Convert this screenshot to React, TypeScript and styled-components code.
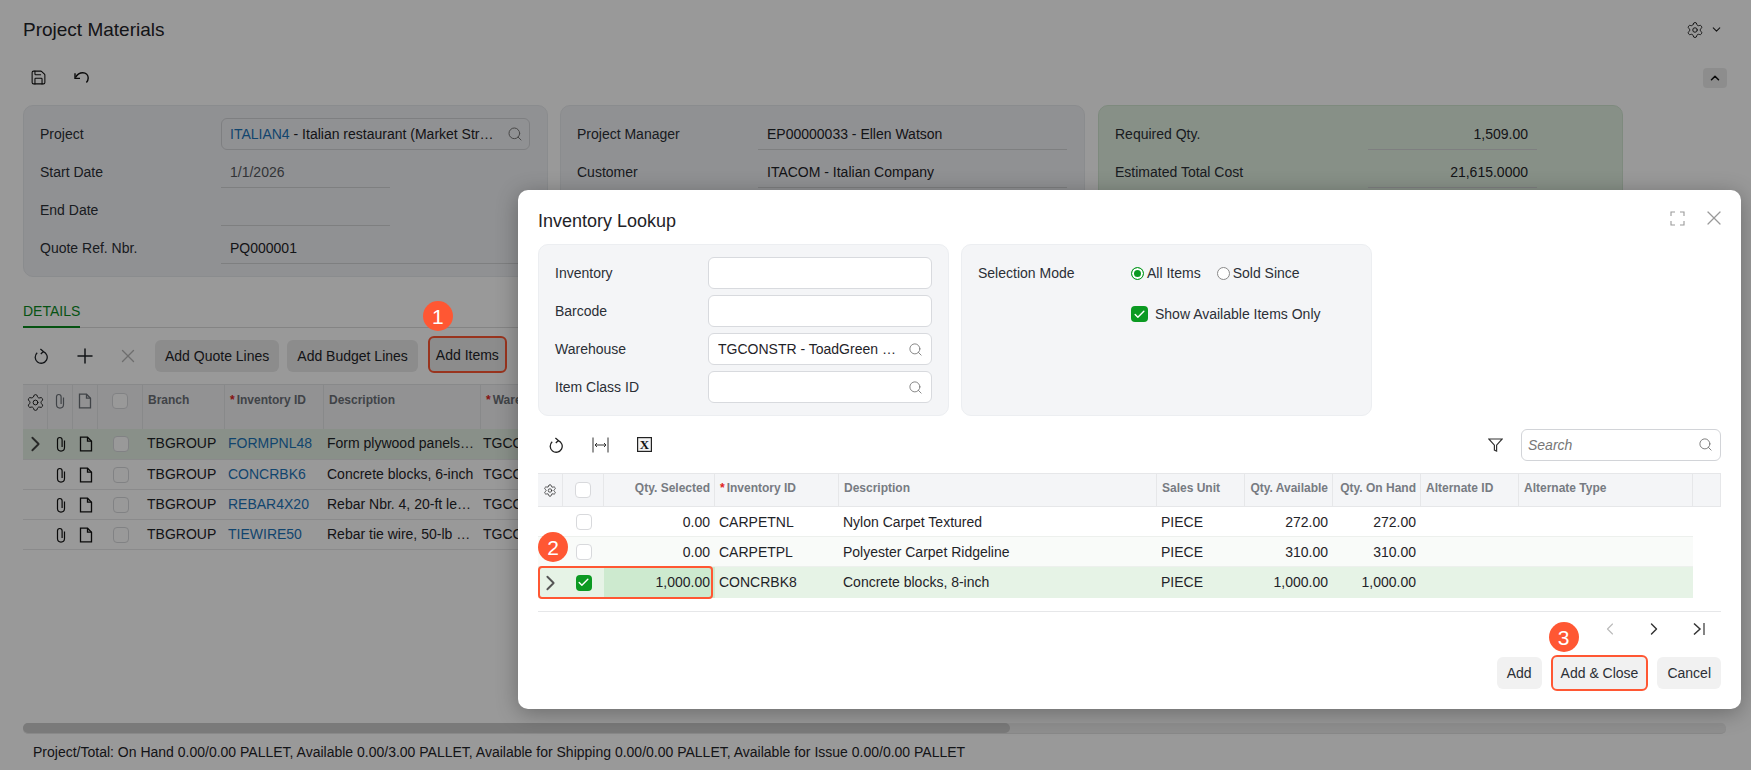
import React from 'react';
import styled, { createGlobalStyle } from 'styled-components';
import { Check, ChevronDown, ChevronLeft, ChevronRight, ChevronUp, Plus, Save, Search, Settings, X } from 'lucide-react';

const pageRows = [
  { id: 'FORMPNL48', desc: 'Form plywood panels, 4x8 ft', active: true },
  { id: 'CONCRBK6', desc: 'Concrete blocks, 6-inch', active: false },
  { id: 'REBAR4X20', desc: 'Rebar Nbr. 4, 20-ft length', active: false },
  { id: 'TIEWIRE50', desc: 'Rebar tie wire, 50-lb spool, annealed', active: false },
];

const lookupRows = [
  { qty: '0.00', id: 'CARPETNL', desc: 'Nylon Carpet Textured', avail: '272.00', hand: '272.00' },
  { qty: '0.00', id: 'CARPETPL', desc: 'Polyester Carpet Ridgeline', avail: '310.00', hand: '310.00' },
  { qty: '1,000.00', id: 'CONCRBK8', desc: 'Concrete blocks, 8-inch', avail: '1,000.00', hand: '1,000.00' },
];

function RefreshIcon() {
  return (
    <svg width="15" height="16" viewBox="0 0 15 16" fill="none" stroke="currentColor" strokeWidth="1.3">
      <path d="M3.2 4.8A6 6 0 1 0 9.2 3.6" />
      <path d="M6.4 1L9.4 3.6L6.8 6" />
    </svg>
  );
}

function UndoIcon() {
  return (
    <svg width="17" height="13" viewBox="0 0 17 13" fill="none" stroke="currentColor" strokeWidth="1.4">
      <path d="M2.5 6.5C4.5 3 7 1.8 9.8 1.8C13 1.8 15.2 4.2 15.2 7C15.2 9 14.4 10.4 13.4 11.4" />
      <path d="M2 2.2V7.4H7" />
    </svg>
  );
}

function ClipIcon() {
  return (
    <svg width="10" height="16" viewBox="0 0 10 16" fill="none" stroke="currentColor" strokeWidth="1.2">
      <path d="M8.5 4.5V11.6a3.5 3.5 0 0 1 -7 0V3.8a2.3 2.3 0 0 1 4.6 0V11" />
    </svg>
  );
}

function FileIcon() {
  return (
    <svg width="14" height="16" viewBox="0 0 14 16" fill="none" stroke="currentColor" strokeWidth="1.3">
      <path d="M1.5 1.2H8.5L12.5 5.2V14.8H1.5Z" />
      <path d="M8.5 1.2V5.2H12.5" />
    </svg>
  );
}

function FitIcon() {
  return (
    <svg width="17" height="16" viewBox="0 0 17 16" fill="none" stroke="#333" strokeWidth="1">
      <path d="M1 0.5V15.5M16 0.5V15.5M3 8H14" />
      <path d="M5 6L3 8L5 10M12 6L14 8L12 10" />
    </svg>
  );
}

function ExcelIcon() {
  return (
    <svg width="15" height="15" viewBox="0 0 15 15">
      <rect x="0.6" y="0.6" width="13.8" height="13.8" fill="#f4f4f4" stroke="#222" strokeWidth="1.2" />
      <text x="7.5" y="12" textAnchor="middle" fontFamily="'Liberation Serif', serif" fontWeight="700" fontSize="13" fill="#111">
        X
      </text>
    </svg>
  );
}

function FilterIcon() {
  return (
    <svg width="15" height="14" viewBox="0 0 15 14" fill="none" stroke="#333" strokeWidth="1.2">
      <path d="M0.8 1H14.2L8.6 7.2V13L6.4 12V7.2Z" />
    </svg>
  );
}

function ExpandIcon() {
  return (
    <svg width="15" height="15" viewBox="0 0 15 15" fill="none" stroke="#9a9a9a" strokeWidth="1.1">
      <path d="M5 1H1V5M10 1H14V5M5 14H1V10M10 14H14V10" />
    </svg>
  );
}

function LastPageIcon() {
  return (
    <svg width="14" height="14" viewBox="0 0 14 14" fill="none" stroke="#333" strokeWidth="1.5">
      <path d="M2 1.5L8 7L2 12.5" />
      <path d="M12 1V13" strokeWidth="1.2" />
    </svg>
  );
}

function App() {
  return (
    <>
      <GlobalStyle />
      <Page>
        <TitleBar>
          <PageTitle>Project Materials</PageTitle>
          <TitleTools>
            <Settings size={18} strokeWidth={1.3} />
            <ChevronDown size={13} strokeWidth={2} />
          </TitleTools>
        </TitleBar>
        <MainToolbar>
          <Save size={17} strokeWidth={1.5} />
          <UndoIcon />
          <CollapseButton>
            <ChevronUp size={14} strokeWidth={2.6} />
          </CollapseButton>
        </MainToolbar>

        <PanelRow>
          <Panel>
            <PanelLine $labelWidth={181}>
              <Label>Project</Label>
              <SearchField $width={309}>
                <FieldText>
                  <Link>ITALIAN4</Link> - Italian restaurant (Market Street Location)
                </FieldText>
                <Search size={16} strokeWidth={1.5} color="#777" />
              </SearchField>
            </PanelLine>
            <PanelLine $labelWidth={181}>
              <Label>Start Date</Label>
              <ReadField $width={169} $muted>1/1/2026</ReadField>
            </PanelLine>
            <PanelLine $labelWidth={181}>
              <Label>End Date</Label>
              <ReadField $width={169} />
            </PanelLine>
            <PanelLine $labelWidth={181}>
              <Label>Quote Ref. Nbr.</Label>
              <ReadField $width={309}>PQ000001</ReadField>
            </PanelLine>
          </Panel>
          <Panel>
            <PanelLine $labelWidth={181}>
              <Label>Project Manager</Label>
              <ReadField $width={309}>EP00000033 - Ellen Watson</ReadField>
            </PanelLine>
            <PanelLine $labelWidth={181}>
              <Label>Customer</Label>
              <ReadField $width={309}>ITACOM - Italian Company</ReadField>
            </PanelLine>
          </Panel>
          <Panel $green>
            <PanelLine $labelWidth={253}>
              <Label>Required Qty.</Label>
              <ReadField $width={169} $right>1,509.00</ReadField>
            </PanelLine>
            <PanelLine $labelWidth={253}>
              <Label>Estimated Total Cost</Label>
              <ReadField $width={169} $right>21,615.0000</ReadField>
            </PanelLine>
          </Panel>
        </PanelRow>

        <TabStrip>
          <Tab>DETAILS</Tab>
        </TabStrip>

        <DetailToolbar>
          <RefreshSlot>
            <RefreshIcon />
          </RefreshSlot>
          <PlusSlot>
            <Plus size={24} strokeWidth={1.5} />
          </PlusSlot>
          <DeleteSlot>
            <X size={22} strokeWidth={1.5} />
          </DeleteSlot>
          <PageButton>Add Quote Lines</PageButton>
          <PageButton>Add Budget Lines</PageButton>
          <BadgeAnchor>
            <PageButton $marked>Add Items</PageButton>
            <Badge $left={-5} $top={-35}>1</Badge>
          </BadgeAnchor>
        </DetailToolbar>

        <DetailGrid>
          <DetailHead>
            <HeadCell $center>
              <Settings size={19} strokeWidth={1.25} color="#222" />
            </HeadCell>
            <HeadCell $center>
              <ClipIcon />
            </HeadCell>
            <HeadCell $center>
              <FileIcon />
            </HeadCell>
            <HeadCell $center>
              <Box />
            </HeadCell>
            <HeadCell>Branch</HeadCell>
            <HeadCell>
              <Star>*</Star>Inventory ID
            </HeadCell>
            <HeadCell>Description</HeadCell>
            <HeadCell>
              <Star>*</Star>Warehouse
            </HeadCell>
          </DetailHead>
          {pageRows.map((row) => (
            <DetailRow key={row.id} $active={row.active}>
              <IconCell>{row.active && <ChevronRight size={26} strokeWidth={1.8} color="#444" />}</IconCell>
              <IconCell>
                <ClipIcon />
              </IconCell>
              <IconCell>
                <FileIcon />
              </IconCell>
              <IconCell>
                <Box />
              </IconCell>
              <TextCell>TBGROUP</TextCell>
              <TextCell>
                <Link>{row.id}</Link>
              </TextCell>
              <TextCell>{row.desc}</TextCell>
              <TextCell>TGCONSTR</TextCell>
            </DetailRow>
          ))}
        </DetailGrid>

        <Spacer />
        <ScrollTrack>
          <ScrollThumb />
        </ScrollTrack>
        <StatusBar>
          Project/Total: On Hand 0.00/0.00 PALLET, Available 0.00/3.00 PALLET, Available for Shipping 0.00/0.00 PALLET, Available for Issue 0.00/0.00 PALLET
        </StatusBar>

        <Overlay />

        <Dialog>
          <DialogHeader>
            <DialogTitle>Inventory Lookup</DialogTitle>
            <DialogTools>
              <ExpandIcon />
              <X size={24} strokeWidth={1.2} color="#999" />
            </DialogTools>
          </DialogHeader>

          <FilterRow>
            <FilterPanel>
              <FilterLine>
                <Label>Inventory</Label>
                <InputBox />
              </FilterLine>
              <FilterLine>
                <Label>Barcode</Label>
                <InputBox />
              </FilterLine>
              <FilterLine>
                <Label>Warehouse</Label>
                <InputBox>
                  <FieldText>TGCONSTR - ToadGreen Construction</FieldText>
                  <Search size={15} strokeWidth={1.4} color="#777" />
                </InputBox>
              </FilterLine>
              <FilterLine>
                <Label>Item Class ID</Label>
                <InputBox>
                  <FieldText />
                  <Search size={15} strokeWidth={1.4} color="#777" />
                </InputBox>
              </FilterLine>
            </FilterPanel>
            <FilterPanel>
              <ModeLine>
                <ModeLabel>Selection Mode</ModeLabel>
                <Choice>
                  <Radio $on />
                  All Items
                </Choice>
                <Choice>
                  <Radio />
                  Sold Since
                </Choice>
              </ModeLine>
              <AvailableLine>
                <Box $on $big>
                  <Check size={13} strokeWidth={2.6} color="#fff" />
                </Box>
                Show Available Items Only
              </AvailableLine>
            </FilterPanel>
          </FilterRow>

          <LookupToolbar>
            <LookupIcons>
              <RefreshIcon />
              <FitIcon />
              <ExcelIcon />
            </LookupIcons>
            <FilterIcon />
            <SearchBox>
              <SearchHint>Search</SearchHint>
              <Search size={15} strokeWidth={1.5} color="#777" />
            </SearchBox>
          </LookupToolbar>

          <LookupGrid>
            <LookupHead>
              <LookupHeadCell $center>
                <Settings size={19} strokeWidth={1.25} color="#222" />
              </LookupHeadCell>
              <LookupHeadCell $center>
                <Box />
              </LookupHeadCell>
              <LookupHeadCell $right>Qty. Selected</LookupHeadCell>
              <LookupHeadCell>
                <Star>*</Star>Inventory ID
              </LookupHeadCell>
              <LookupHeadCell>Description</LookupHeadCell>
              <LookupHeadCell>Sales Unit</LookupHeadCell>
              <LookupHeadCell $right>Qty. Available</LookupHeadCell>
              <LookupHeadCell $right>Qty. On Hand</LookupHeadCell>
              <LookupHeadCell>Alternate ID</LookupHeadCell>
              <LookupHeadCell>Alternate Type</LookupHeadCell>
              <LookupHeadCell />
            </LookupHead>
            {lookupRows.map((row, index) => {
              const selected = index === 2;
              return (
                <LookupRow key={row.id} $selected={selected} $odd={index === 1}>
                  {index === 1 && <Badge $left={0} $top={-5}>2</Badge>}
                  {selected && <RowMark />}
                  <IconCell>{selected && <ChevronRight size={26} strokeWidth={1.8} color="#555" />}</IconCell>
                  <IconCell>
                    {selected ? (
                      <Box $on>
                        <Check size={13} strokeWidth={2.6} color="#fff" />
                      </Box>
                    ) : (
                      <Box />
                    )}
                  </IconCell>
                  <TextCell $right $tint={selected}>{row.qty}</TextCell>
                  <TextCell>{row.id}</TextCell>
                  <TextCell>{row.desc}</TextCell>
                  <TextCell>PIECE</TextCell>
                  <TextCell $right>{row.avail}</TextCell>
                  <TextCell $right>{row.hand}</TextCell>
                  <TextCell />
                  <TextCell />
                </LookupRow>
              );
            })}
          </LookupGrid>

          <Pager>
            <ChevronLeft size={20} strokeWidth={1.4} color="#bbb" />
            <ChevronRight size={20} strokeWidth={1.7} color="#333" />
            <LastPageSlot>
              <LastPageIcon />
            </LastPageSlot>
          </Pager>

          <DialogFooter>
            <DialogButton>Add</DialogButton>
            <BadgeAnchor>
              <DialogButton $marked>Add &amp; Close</DialogButton>
              <Badge $left={-2} $top={-33}>3</Badge>
            </BadgeAnchor>
            <DialogButton>Cancel</DialogButton>
          </DialogFooter>
        </Dialog>
      </Page>
    </>
  );
}

export default App;

const GlobalStyle = createGlobalStyle`
  html, body {
    margin: 0;
    padding: 0;
    height: 100%;
    overflow: hidden;
    background: #fff;
  }
  #root {
    height: 100%;
  }
  * {
    box-sizing: border-box;
  }
`;

const Page = styled.div`
  position: relative;
  width: 1751px;
  height: 770px;
  display: flex;
  flex-direction: column;
  overflow: hidden;
  background: #fff;
  color: #1f2328;
  font-family: 'Liberation Sans', Arial, sans-serif;
  font-size: 14px;
`;

const TitleBar = styled.div`
  height: 59px;
  padding: 0 28px 0 23px;
  display: flex;
  align-items: center;
  justify-content: space-between;
  flex-shrink: 0;
`;

const PageTitle = styled.div`
  font-size: 19px;
  color: #1f2328;
`;

const TitleTools = styled.div`
  display: flex;
  align-items: center;
  gap: 6px;
  color: #222;
`;

const MainToolbar = styled.div`
  height: 37px;
  padding: 0 24px 0 30px;
  display: flex;
  align-items: center;
  gap: 26px;
  flex-shrink: 0;
  color: #111;
  margin-bottom: 9px;
`;

const CollapseButton = styled.div`
  width: 24px;
  height: 20px;
  margin-left: auto;
  display: flex;
  align-items: center;
  justify-content: center;
  border-radius: 4px;
  background: #ececec;
  color: #111;
`;

const PanelRow = styled.div`
  padding-left: 23px;
  display: flex;
  gap: 12px;
  flex-shrink: 0;
`;

const Panel = styled.div<{ $green?: boolean }>`
  width: 525px;
  height: 172px;
  margin-left: ${(p) => (p.$green ? 1 : 0)}px;
  padding: 12px 16px;
  display: flex;
  flex-direction: column;
  gap: 6px;
  border-radius: 10px;
  border: 1px solid ${(p) => (p.$green ? '#d3e7d3' : '#e7e9ed')};
  background: ${(p) => (p.$green ? '#e2f1e2' : '#f1f2f5')};
`;

const PanelLine = styled.div<{ $labelWidth: number }>`
  height: 32px;
  display: grid;
  grid-template-columns: ${(p) => p.$labelWidth}px 1fr;
  align-items: center;
`;

const Label = styled.div`
  color: #2b2f36;
  white-space: nowrap;
`;

const SearchField = styled.div<{ $width: number }>`
  width: ${(p) => p.$width}px;
  height: 32px;
  padding: 0 6px 0 8px;
  display: flex;
  align-items: center;
  gap: 6px;
  border: 1px solid #d2d4d8;
  border-radius: 6px;
  background: #f1f2f5;
  & > svg {
    flex-shrink: 0;
  }
`;

const FieldText = styled.div`
  flex: 1;
  min-width: 0;
  white-space: nowrap;
  overflow: hidden;
  text-overflow: ellipsis;
`;

const Link = styled.span`
  color: #1d74b8;
`;

const ReadField = styled.div<{ $width: number; $muted?: boolean; $right?: boolean }>`
  width: ${(p) => p.$width}px;
  height: 32px;
  padding: 0 9px;
  display: flex;
  align-items: center;
  justify-content: ${(p) => (p.$right ? 'flex-end' : 'flex-start')};
  border-bottom: 1px solid #d2d4d6;
  color: ${(p) => (p.$muted ? '#55585d' : '#1f2328')};
`;

const TabStrip = styled.div`
  margin: 20px 23px 0;
  height: 31px;
  display: flex;
  border-bottom: 1px solid #dcdcdc;
  flex-shrink: 0;
`;

const Tab = styled.div`
  height: 31px;
  padding: 6px 0 0;
  border-bottom: 2px solid #0a8a1e;
  color: #0a8a1e;
`;

const DetailToolbar = styled.div`
  height: 40px;
  margin: 8px 0 8px;
  padding-left: 34px;
  display: flex;
  align-items: center;
  flex-shrink: 0;
`;

const RefreshSlot = styled.div`
  width: 39px;
  display: flex;
  align-items: center;
  color: #1f2328;
`;

const PlusSlot = styled.div`
  width: 44px;
  display: flex;
  align-items: center;
  color: #1f2328;
`;

const DeleteSlot = styled.div`
  width: 30px;
  display: flex;
  align-items: center;
  color: #b8b8b8;
`;

const BadgeAnchor = styled.div`
  position: relative;
  display: inline-flex;
  margin-left: 10px;
`;

const PageButton = styled.div<{ $marked?: boolean }>`
  height: ${(p) => (p.$marked ? 37 : 32)}px;
  padding: 0 ${(p) => (p.$marked ? 6 : 10)}px;
  margin-left: ${(p) => (p.$marked ? 0 : 8)}px;
  margin-bottom: ${(p) => (p.$marked ? 3 : 0)}px;
  display: flex;
  align-items: center;
  border-radius: 6px;
  background: #e9e9e9;
  border: ${(p) => (p.$marked ? '2px solid #ff5733' : 'none')};
  white-space: nowrap;
  color: #1f2328;
`;

const Badge = styled.div<{ $left: number; $top: number }>`
  position: absolute;
  left: ${(p) => p.$left}px;
  top: ${(p) => p.$top}px;
  z-index: 3;
  width: 30px;
  height: 30px;
  display: flex;
  align-items: center;
  justify-content: center;
  border-radius: 50%;
  background: #ff5733;
  color: #fff;
  font-size: 21px;
  line-height: 1;
`;

const DetailGrid = styled.div`
  margin: 0 23px;
  flex-shrink: 0;
`;

const DetailHead = styled.div`
  height: 45px;
  display: grid;
  grid-template-columns: 25px 25px 25px 45px 82px 99px 157px 1fr;
  background: #f3f4f6;
  border-top: 1px solid #e3e4e7;
`;

const HeadCell = styled.div<{ $center?: boolean }>`
  padding: ${(p) => (p.$center ? '8px 0 0' : '8px 5px 0')};
  display: flex;
  align-items: flex-start;
  justify-content: ${(p) => (p.$center ? 'center' : 'flex-start')};
  border-right: 1px solid #e3e4e7;
  color: #6c7077;
  font-size: 12px;
  font-weight: 700;
  white-space: nowrap;
`;

const Star = styled.span`
  color: #e02020;
  margin-right: 2px;
`;

const DetailRow = styled.div<{ $active?: boolean }>`
  height: ${(p) => (p.$active ? 31 : 30)}px;
  display: grid;
  grid-template-columns: 25px 25px 25px 45px 81px 99px 156px 1fr;
  align-items: center;
  background: ${(p) => (p.$active ? '#e4f1e4' : '#fff')};
  border-bottom: 1px solid #e6e7e8;
`;

const IconCell = styled.div`
  display: flex;
  align-items: center;
  justify-content: center;
  color: #111;
`;

const TextCell = styled.div<{ $right?: boolean; $tint?: boolean }>`
  height: 100%;
  padding: 0 ${(p) => (p.$right ? 5 : 4)}px;
  min-width: 0;
  overflow: hidden;
  white-space: nowrap;
  text-overflow: ellipsis;
  line-height: 29px;
  text-align: ${(p) => (p.$right ? 'right' : 'left')};
  background: ${(p) => (p.$tint ? '#cdeacf' : 'transparent')};
`;

const Box = styled.div<{ $on?: boolean; $big?: boolean }>`
  width: ${(p) => (p.$big ? 17 : 16)}px;
  height: 16px;
  display: flex;
  align-items: center;
  justify-content: center;
  flex-shrink: 0;
  border-radius: 4px;
  border: ${(p) => (p.$on ? 'none' : '1.5px solid #d8d9dc')};
  background: ${(p) => (p.$on ? '#0b9a22' : '#fff')};
`;

const Spacer = styled.div`
  flex: 1;
`;

const ScrollTrack = styled.div`
  margin: 0 25px 0 23px;
  height: 11px;
  flex-shrink: 0;
  border-radius: 5px;
  background: #eeeeee;
  border-bottom: 1px solid #e4e4e4;
`;

const ScrollThumb = styled.div`
  width: 987px;
  height: 10px;
  border-radius: 5px;
  background: #cbcbcb;
`;

const StatusBar = styled.div`
  height: 36px;
  padding: 0 33px;
  display: flex;
  align-items: center;
  flex-shrink: 0;
  white-space: nowrap;
`;

const Overlay = styled.div`
  position: absolute;
  inset: 0;
  background: rgba(0, 0, 0, 0.4);
`;

const Dialog = styled.div`
  position: absolute;
  left: 518px;
  top: 190px;
  width: 1223px;
  height: 519px;
  padding: 0 20px;
  display: flex;
  flex-direction: column;
  border-radius: 10px;
  background: #fff;
  box-shadow: 0 4px 22px rgba(0, 0, 0, 0.3);
`;

const DialogHeader = styled.div`
  height: 54px;
  padding: 8px 0 0;
  display: flex;
  align-items: center;
  justify-content: space-between;
  flex-shrink: 0;
`;

const DialogTitle = styled.div`
  font-size: 18px;
  color: #1f2328;
`;

const DialogTools = styled.div`
  margin-top: -6px;
  margin-right: -5px;
  display: flex;
  align-items: center;
  gap: 17px;
`;

const FilterRow = styled.div`
  display: flex;
  gap: 12px;
  flex-shrink: 0;
`;

const FilterPanel = styled.div`
  width: 411px;
  height: 172px;
  padding: 12px 16px;
  display: flex;
  flex-direction: column;
  gap: 6px;
  border: 1px solid #eceef1;
  border-radius: 10px;
  background: #f4f5f7;
`;

const FilterLine = styled.div`
  height: 32px;
  display: grid;
  grid-template-columns: 153px minmax(0, 1fr);
  align-items: center;
`;

const InputBox = styled.div`
  height: 32px;
  padding: 0 8px 0 9px;
  display: flex;
  align-items: center;
  gap: 12px;
  border: 1px solid #d8dade;
  border-radius: 6px;
  background: #fff;
  & > svg {
    flex-shrink: 0;
  }
`;

const ModeLine = styled.div`
  height: 32px;
  display: flex;
  align-items: center;
`;

const ModeLabel = styled.div`
  width: 153px;
  color: #2b2f36;
`;

const Choice = styled.div`
  display: flex;
  align-items: center;
  gap: 3px;
  margin-right: 16px;
  color: #2b2f36;
`;

const Radio = styled.div<{ $on?: boolean }>`
  width: 13px;
  height: 13px;
  border-radius: 50%;
  border: 1px solid ${(p) => (p.$on ? '#0b9a22' : '#8a8a8a')};
  background: ${(p) => (p.$on ? '#0b9a22' : '#fff')};
  box-shadow: ${(p) => (p.$on ? 'inset 0 0 0 2px #fff' : 'none')};
`;

const AvailableLine = styled.div`
  height: 32px;
  margin-top: 3px;
  padding-left: 153px;
  display: flex;
  align-items: center;
  gap: 7px;
  color: #2b2f36;
`;

const LookupToolbar = styled.div`
  height: 57px;
  display: flex;
  align-items: center;
  flex-shrink: 0;
`;

const LookupIcons = styled.div`
  flex: 1;
  padding-left: 11px;
  display: flex;
  align-items: center;
  gap: 28px;
  color: #222;
`;

const SearchBox = styled.div`
  width: 200px;
  height: 32px;
  margin-left: 18px;
  padding: 0 7px 0 6px;
  display: flex;
  align-items: center;
  justify-content: space-between;
  border: 1px solid #d2d4d8;
  border-radius: 6px;
  background: #fff;
`;

const SearchHint = styled.span`
  color: #777;
  font-style: italic;
`;

const LookupGrid = styled.div`
  flex-shrink: 0;
  height: 139px;
  border-bottom: 1px solid #e6e7e9;
`;

const LookupHead = styled.div`
  height: 34px;
  display: grid;
  grid-template-columns: 25px 41px 111px 124px 318px 88px 88px 88px 98px 174px 1fr;
  background: #f4f5f7;
  border-top: 1px solid #e6e7e9;
  border-bottom: 1px solid #e6e7e9;
`;

const LookupHeadCell = styled.div<{ $center?: boolean; $right?: boolean }>`
  padding: 0 ${(p) => (p.$right ? 4 : 5)}px ${(p) => (p.$center ? 0 : 4)}px;
  display: flex;
  align-items: center;
  justify-content: ${(p) => (p.$center ? 'center' : p.$right ? 'flex-end' : 'flex-start')};
  border-right: 1px solid #e6e7e9;
  color: #777b82;
  font-size: 12px;
  font-weight: 700;
  white-space: nowrap;
`;

const LookupRow = styled.div<{ $selected?: boolean; $odd?: boolean }>`
  position: relative;
  width: 1155px;
  height: ${(p) => (p.$selected ? 31 : 30)}px;
  display: grid;
  grid-template-columns: 25px 41px 111px 124px 318px 88px 88px 88px 98px 174px;
  align-items: center;
  background: ${(p) => (p.$selected ? '#e6f3e6' : p.$odd ? '#f9fbf9' : '#fff')};
  border-bottom: ${(p) => (p.$selected ? 'none' : '1px solid #edf0ed')};
  & > ${TextCell} {
    line-height: 31px;
  }
`;

const RowMark = styled.div`
  position: absolute;
  left: 0;
  top: -1px;
  width: 175px;
  height: 33px;
  z-index: 2;
  border: 2px solid #ff5733;
  border-radius: 4px;
  pointer-events: none;
`;

const Pager = styled.div`
  height: 34px;
  padding-right: 15px;
  display: flex;
  align-items: center;
  justify-content: flex-end;
  gap: 24px;
  flex-shrink: 0;
`;

const LastPageSlot = styled.div`
  margin-left: 4px;
  display: flex;
`;

const DialogFooter = styled.div`
  height: 54px;
  display: flex;
  align-items: center;
  justify-content: flex-end;
  flex-shrink: 0;
  & > ${BadgeAnchor} {
    margin: 0 9px;
  }
`;

const DialogButton = styled.div<{ $marked?: boolean }>`
  height: ${(p) => (p.$marked ? 36 : 32)}px;
  padding: 0 ${(p) => (p.$marked ? 8 : 10)}px;
  display: flex;
  align-items: center;
  border-radius: 6px;
  background: #f1f1f1;
  border: ${(p) => (p.$marked ? '2px solid #ff5733' : 'none')};
  color: #2b2f36;
  white-space: nowrap;
`;
